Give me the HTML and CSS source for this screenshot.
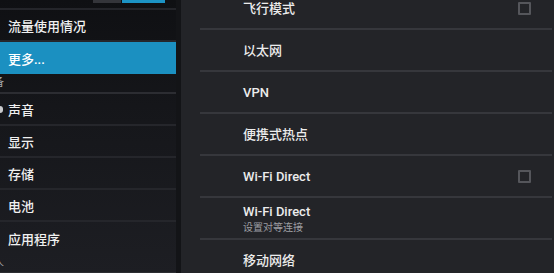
FILE: index.html
```html
<!DOCTYPE html>
<html lang="zh-CN">
<head>
  <meta charset="UTF-8">
  <title>设置</title>
  <link rel="stylesheet" href="styles.css">
</head>
<body>
  <div id="settings">
    <div id="sidebar">
      <div class="switch-strip">
        <span class="switch-off"></span>
        <span class="switch-on"></span>
      </div>
      <div class="side-item">流量使用情况</div>
      <div class="side-item selected">更多...</div>
      <div class="side-header">设备</div>
      <div class="side-item"><span class="edge-icon"></span>声音</div>
      <div class="side-item">显示</div>
      <div class="side-item">存储</div>
      <div class="side-item">电池</div>
      <div class="side-item">应用程序</div>
      <div class="side-header">个人</div>
    </div>

    <div id="detail">
      <div class="pref">
        <span class="pref-title">飞行模式</span>
        <span class="checkbox"></span>
      </div>
      <div class="pref"><span class="pref-title">以太网</span></div>
      <div class="pref"><span class="pref-title">VPN</span></div>
      <div class="pref"><span class="pref-title">便携式热点</span></div>
      <div class="pref">
        <span class="pref-title">Wi-Fi Direct</span>
        <span class="checkbox"></span>
      </div>
      <div class="pref">
        <div class="pref-text">
          <span class="pref-title">Wi-Fi Direct</span>
          <span class="pref-summary">设置对等连接</span>
        </div>
      </div>
      <div class="pref"><span class="pref-title">移动网络</span></div>
    </div>
  </div>
</body>
</html>
```

FILE: styles.css
```css
  body {
    margin: 0;
    padding: 0;
    background-color: #232428;
    font-family: Roboto, "Noto Sans CJK SC", sans-serif;
    overflow: hidden;
  }
  #settings {
    display: flex;
    height: 273px;
    overflow: hidden;
  }
  #sidebar {
    width: 176px;
    flex-shrink: 0;
    border-right: 5px solid #131417;
    background: linear-gradient(#0f1013, #16171b 45%, #1d1e23);
    overflow: hidden;
  }
  .switch-strip {
    display: flex;
    height: 8px;
    padding-left: 93px;
    border-bottom: 2px solid #24252a;
  }
  .switch-off {
    width: 28px;
    height: 3px;
    background-color: #34353a;
  }
  .switch-on {
    width: 43px;
    height: 3px;
    margin-left: 1px;
    background-color: #1c93c4;
  }
  .side-item {
    display: flex;
    align-items: center;
    height: 30px;
    padding-left: 8px;
    font-size: 13px;
    font-weight: 500;
    color: #f0f0f0;
    border-bottom: 2px solid #25262b;
  }
  .side-item.selected {
    height: 32px;
    background-color: #1b90c1;
    color: #ffffff;
    border-bottom: none;
  }
  .side-item:has(+ .side-header) {
    border-bottom: none;
    height: 32px;
  }
  .side-header {
    height: 18px;
    line-height: 18px;
    margin-left: -18px;
    font-size: 11px;
    color: #a8a9ad;
    border-bottom: 2px solid #2c2d32;
  }
  .edge-icon {
    width: 3px;
    height: 7px;
    margin-left: -8px;
    margin-right: 5px;
    border-radius: 0 3px 3px 0;
    background-color: #c9cacd;
  }
  #detail {
    flex: 1;
    margin-top: -12px;
    padding-left: 19px;
    padding-right: 2px;
  }
  .pref {
    display: flex;
    align-items: center;
    justify-content: space-between;
    height: 40px;
    padding-left: 43px;
    padding-right: 21px;
    border-bottom: 2px solid #36373c;
  }
  .pref:last-child {
    border-bottom: none;
  }
  .pref-text {
    display: flex;
    flex-direction: column;
    padding-top: 2px;
  }
  .pref-title {
    font-size: 13px;
    font-weight: 500;
    color: #ececec;
    line-height: 17px;
  }
  .pref-summary {
    font-size: 10px;
    color: #9d9ea2;
    line-height: 15px;
  }
  .checkbox {
    width: 9px;
    height: 9px;
    border: 2px solid #55565b;
    border-radius: 1px;
  }
```
